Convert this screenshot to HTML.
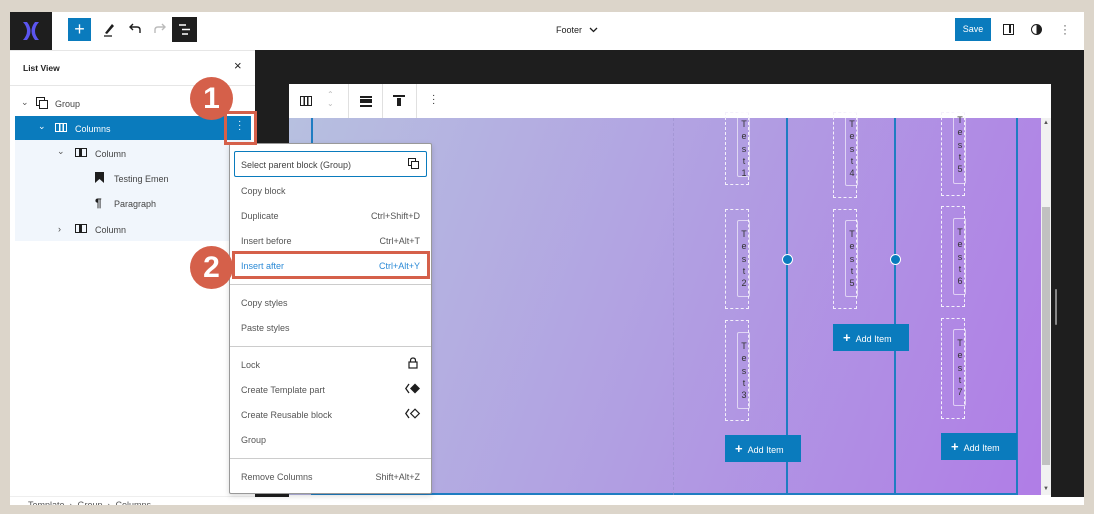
<!DOCTYPE html>
<html><head><meta charset="utf-8"><style>
*{margin:0;padding:0;box-sizing:border-box}
body{width:1094px;height:514px;background:#dcd5ca;font-family:"Liberation Sans",sans-serif;position:relative;overflow:hidden;color:#1e1e1e}
.a{position:absolute}
.t{font-size:9px}
.mi{position:absolute;left:11px;font-size:9px;color:#555}
.sc{position:absolute;right:11px;font-size:9px;color:#555}
.db{position:absolute;border:1px dashed #f4f0fb;width:24px}
.ib{position:absolute;border:1px solid rgba(255,255,255,.6);width:13px;border-radius:2px}
.vt{position:absolute;width:10px;font-size:9px;line-height:12.3px;text-align:center;color:#333}
.btn{position:absolute;background:#0a7bbd;color:#fff;font-size:9px;width:76px;height:27px;line-height:27px;padding-left:10px}
.btn b{font-size:13px;margin-right:5px;font-weight:bold}
.vl{position:absolute;width:2px;background:#1f7dc2;top:118px;height:377px}
</style></head><body>
<div class="a" style="left:10px;top:12px;width:1074px;height:493px;background:#fff"></div>
<!-- top bar -->
<div class="a" style="left:10px;top:12px;width:42px;height:38px;background:#1e1e1e"></div>
<svg class="a" style="left:18px;top:18px" width="26" height="26" viewBox="0 0 26 26"><path d="M5 4 Q13 13 5 22 L9 22 Q16 13 9 4Z M21 4 Q13 13 21 22 L17 22 Q10 13 17 4Z" fill="#5b55f0"/></svg>
<div class="a" style="left:68px;top:18px;width:23px;height:23px;background:#0a7bbd;color:#fff;text-align:center;font-size:18px;line-height:22px">+</div>
<svg class="a" style="left:101px;top:20px" width="16" height="18"><path d="M4 13 L11 4 L13 6 L6 14Z" fill="#1e1e1e"/><path d="M3 16 H11" stroke="#1e1e1e" stroke-width="1.3"/></svg>
<svg class="a" style="left:127px;top:22px" width="16" height="14"><path d="M13 11 V8 Q13 5 10 5 H3 M6 2 L3 5 L6 8" fill="none" stroke="#1e1e1e" stroke-width="1.4"/></svg>
<svg class="a" style="left:152px;top:22px" width="16" height="14"><path d="M3 11 V8 Q3 5 6 5 H13 M10 2 L13 5 L10 8" fill="none" stroke="#bbb" stroke-width="1.4"/></svg>
<div class="a" style="left:172px;top:17px;width:25px;height:25px;background:#1e1e1e"></div>
<svg class="a" style="left:177px;top:22px" width="15" height="15"><path d="M2 3 H9 M5 7.5 H13 M5 12 H11" stroke="#fff" stroke-width="1.5"/></svg>
<div class="a t" style="left:556px;top:25px">Footer</div>
<svg class="a" style="left:589px;top:27px" width="9" height="6"><path d="M1 1 L4.5 4.5 L8 1" fill="none" stroke="#1e1e1e" stroke-width="1.3"/></svg>
<div class="a" style="left:955px;top:18px;width:36px;height:23px;background:#0a7bbd;color:#fff;font-size:9px;text-align:center;line-height:23px">Save</div>
<div class="a" style="left:1003px;top:24px;width:11px;height:11px;border:1.5px solid #1e1e1e"><div class="a" style="left:5px;top:0;width:1.5px;height:8px;background:#1e1e1e"></div></div>
<div class="a" style="left:1031px;top:24px;width:11px;height:11px;border:1.5px solid #1e1e1e;border-radius:50%;background:linear-gradient(90deg,#fff 50%,#1e1e1e 50%)"></div>
<div class="a" style="left:1063px;top:23px;font-size:12px;line-height:4px;color:#555">·<br>·<br>·</div>
<!-- left panel -->
<div class="a" style="left:10px;top:50px;width:245px;height:455px;background:#fff;border-top:1px solid #e6e6e6"></div>
<div class="a t" style="left:23px;top:63px;font-weight:bold;font-size:8.5px">List View</div>
<div class="a" style="left:234px;top:58px;font-size:13px">×</div>
<div class="a" style="left:10px;top:85px;width:245px;height:1px;background:#e6e6e6"></div>
<div class="a" style="left:15px;top:140px;width:236px;height:101px;background:#f1f6fc"></div>
<div class="a" style="left:15px;top:116px;width:236px;height:24px;background:#0a7bbd"></div>
<div class="a t" style="left:21px;top:97px;color:#555">⌄</div>
<div class="a" style="left:36px;top:97px;width:9px;height:9px;border:1.3px solid #1e1e1e"></div><div class="a" style="left:39px;top:100px;width:9px;height:9px;border:1.3px solid #1e1e1e;background:#fff"></div>
<div class="a t" style="left:55px;top:99px;color:#444">Group</div>
<div class="a t" style="left:38px;top:121px;color:#fff">⌄</div>
<div class="a" style="left:55px;top:123px;width:12px;height:9px;border:1.3px solid #fff;background:linear-gradient(90deg,transparent 3px,#fff 3px,#fff 4.3px,transparent 4.3px,transparent 6.5px,#fff 6.5px,#fff 7.8px,transparent 7.8px)"></div>
<div class="a t" style="left:75px;top:124px;color:#fff">Columns</div>
<div class="a" style="left:238px;top:120px;font-size:10px;line-height:4px;color:#fff">·<br>·<br>·</div>
<div class="a t" style="left:57px;top:146px;color:#555">⌄</div>
<div class="a" style="left:75px;top:148px;width:12px;height:9px;border:1.3px solid #1e1e1e;background:linear-gradient(90deg,transparent 3px,#1e1e1e 3px,#1e1e1e 6px,transparent 6px)"></div>
<div class="a t" style="left:95px;top:149px;color:#444">Column</div>
<svg class="a" style="left:95px;top:172px" width="9" height="11"><path d="M0 0 H9 V11 L4.5 7 L0 11Z" fill="#1e1e1e"/></svg>
<div class="a t" style="left:114px;top:174px;color:#444">Testing Emen</div>
<div class="a" style="left:95px;top:196px;font-size:12px;font-weight:bold">¶</div>
<div class="a t" style="left:114px;top:199px;color:#444">Paragraph</div>
<div class="a t" style="left:58px;top:224px;color:#444">›</div>
<div class="a" style="left:75px;top:224px;width:12px;height:9px;border:1.3px solid #1e1e1e;background:linear-gradient(90deg,transparent 3px,#1e1e1e 3px,#1e1e1e 6px,transparent 6px)"></div>
<div class="a t" style="left:95px;top:225px;color:#444">Column</div>
<div class="a" style="left:10px;top:496px;width:245px;height:1px;background:#eee"></div>
<div class="a t" style="left:28px;top:500px;color:#555">Template &nbsp;›&nbsp; Group &nbsp;›&nbsp; Columns</div>
<!-- editor -->
<div class="a" style="left:255px;top:50px;width:829px;height:447px;background:#1e1e1e"></div>
<div class="a" style="left:289px;top:84px;width:762px;height:413px;background:#fff"></div>
<div class="a" style="left:289px;top:118px;width:752px;height:377px;background:linear-gradient(110deg,#b7c0e0 0%,#b19fe2 50%,#b07de6 100%)"></div>
<div class="a" style="left:1041px;top:118px;width:10px;height:377px;background:#f1f1f1"></div>
<div class="a" style="left:1042px;top:207px;width:8px;height:258px;background:#c1c1c1"></div>
<div class="a" style="left:1055px;top:289px;width:2px;height:36px;background:#888;border-radius:1px"></div>
<div class="a" style="left:1043px;top:120px;font-size:6px;color:#555">▲</div>
<div class="a" style="left:1043px;top:486px;font-size:6px;color:#555">▼</div>
<!-- block toolbar -->
<div class="a" style="left:348px;top:84px;width:1px;height:34px;background:#e0e0e0"></div>
<div class="a" style="left:382px;top:84px;width:1px;height:34px;background:#e0e0e0"></div>
<div class="a" style="left:416px;top:84px;width:1px;height:34px;background:#e0e0e0"></div>
<div class="a" style="left:300px;top:96px;width:12px;height:10px;border:1.3px solid #1e1e1e;background:linear-gradient(90deg,transparent 2.5px,#1e1e1e 2.5px,#1e1e1e 3.8px,transparent 3.8px,transparent 6px,#1e1e1e 6px,#1e1e1e 7.3px,transparent 7.3px)"></div>
<div class="a" style="left:327px;top:90px;font-size:8px;color:#bbb;line-height:9px">⌃<br>⌄</div>
<div class="a" style="left:360px;top:96px;width:12px;height:1.5px;background:#1e1e1e"></div><div class="a" style="left:360px;top:99px;width:12px;height:4px;background:#1e1e1e"></div><div class="a" style="left:360px;top:105px;width:12px;height:1.5px;background:#1e1e1e"></div>
<div class="a" style="left:393px;top:95px;width:12px;height:1.5px;background:#1e1e1e"></div><div class="a" style="left:397px;top:98px;width:4px;height:8px;background:#1e1e1e"></div>
<div class="a" style="left:432px;top:94px;font-size:10px;line-height:4px;color:#1e1e1e">·<br>·<br>·</div>
<!-- columns -->
<div class="vl" style="left:311px"></div>
<div class="vl" style="left:786px"></div>
<div class="vl" style="left:894px"></div>
<div class="vl" style="left:1016px"></div>
<div class="a" style="left:311px;top:493px;width:707px;height:2px;background:#1f7dc2"></div>
<div class="a" style="left:673px;top:118px;width:0;height:377px;border-left:1px dashed rgba(150,140,200,.5)"></div>
<div class="a" style="left:782px;top:254px;width:11px;height:11px;border-radius:50%;background:#0a7bbd;border:1px solid #fff"></div>
<div class="a" style="left:890px;top:254px;width:11px;height:11px;border-radius:50%;background:#0a7bbd;border:1px solid #fff"></div>
<!-- col1 -->
<div class="db" style="left:725px;top:112px;height:73px"></div><div class="ib" style="left:737px;top:112px;height:65px"></div>
<div class="vt" style="left:739px;top:118px">T<br>e<br>s<br>t<br>1</div>
<div class="db" style="left:725px;top:209px;height:100px"></div><div class="ib" style="left:737px;top:220px;height:77px"></div>
<div class="vt" style="left:739px;top:228px">T<br>e<br>s<br>t<br>2</div>
<div class="db" style="left:725px;top:320px;height:101px"></div><div class="ib" style="left:737px;top:332px;height:77px"></div>
<div class="vt" style="left:739px;top:340px">T<br>e<br>s<br>t<br>3</div>
<div class="btn" style="left:725px;top:435px"><b>+</b>Add Item</div>
<!-- col2 -->
<div class="db" style="left:833px;top:112px;height:86px"></div><div class="ib" style="left:845px;top:112px;height:74px"></div>
<div class="vt" style="left:847px;top:118px">T<br>e<br>s<br>t<br>4</div>
<div class="db" style="left:833px;top:209px;height:100px"></div><div class="ib" style="left:845px;top:220px;height:77px"></div>
<div class="vt" style="left:847px;top:228px">T<br>e<br>s<br>t<br>5</div>
<div class="btn" style="left:833px;top:324px"><b>+</b>Add Item</div>
<!-- col3 -->
<div class="db" style="left:941px;top:112px;height:84px"></div><div class="ib" style="left:953px;top:112px;height:72px"></div>
<div class="vt" style="left:955px;top:114px">T<br>e<br>s<br>t<br>5</div>
<div class="db" style="left:941px;top:206px;height:101px"></div><div class="ib" style="left:953px;top:218px;height:77px"></div>
<div class="vt" style="left:955px;top:226px">T<br>e<br>s<br>t<br>6</div>
<div class="db" style="left:941px;top:318px;height:101px"></div><div class="ib" style="left:953px;top:329px;height:77px"></div>
<div class="vt" style="left:955px;top:337px">T<br>e<br>s<br>t<br>7</div>
<div class="btn" style="left:941px;top:433px"><b>+</b>Add Item</div>
<!-- menu -->
<div class="a" style="left:229px;top:143px;width:203px;height:351px;background:#fff;border:1px solid #999;border-radius:2px;box-shadow:0 2px 6px rgba(0,0,0,.15)">
<div class="a" style="left:4px;top:7px;width:193px;height:26px;border:1.5px solid #0a7bbd;border-radius:2px"></div>
<div class="mi" style="top:16px;color:#444">Select parent block (Group)</div>
<div class="a" style="left:178px;top:14px;width:8px;height:8px;border:1.2px solid #1e1e1e"></div><div class="a" style="left:181px;top:17px;width:8px;height:8px;border:1.2px solid #1e1e1e;background:#fff"></div>
<div class="mi" style="top:42px">Copy block</div>
<div class="mi" style="top:67px">Duplicate</div><div class="sc" style="top:67px">Ctrl+Shift+D</div>
<div class="mi" style="top:92px">Insert before</div><div class="sc" style="top:92px">Ctrl+Alt+T</div>
<div class="mi" style="top:117px;color:#2b8ad6">Insert after</div><div class="sc" style="top:117px;color:#2b8ad6">Ctrl+Alt+Y</div>
<div class="a" style="left:0;top:140px;width:201px;height:1px;background:#ccc"></div>
<div class="mi" style="top:154px">Copy styles</div>
<div class="mi" style="top:179px">Paste styles</div>
<div class="a" style="left:0;top:202px;width:201px;height:1px;background:#ccc"></div>
<div class="mi" style="top:216px">Lock</div>
<svg class="a" style="left:178px;top:213px" width="10" height="12"><path d="M2.5 5 V3.5 Q2.5 1 5 1 Q7.5 1 7.5 3.5 V5" fill="none" stroke="#1e1e1e" stroke-width="1.2"/><rect x="1" y="5" width="8" height="6" fill="none" stroke="#1e1e1e" stroke-width="1.2"/></svg>
<div class="mi" style="top:241px">Create Template part</div>
<svg class="a" style="left:175px;top:239px" width="16" height="11"><path d="M4 1 L0.8 5.5 L4 10" fill="none" stroke="#1e1e1e" stroke-width="1.3"/><path d="M10 0.5 L15 5.5 L10 10.5 L5 5.5Z" fill="#1e1e1e"/></svg>
<div class="mi" style="top:266px">Create Reusable block</div>
<svg class="a" style="left:175px;top:264px" width="16" height="11"><path d="M4 1 L0.8 5.5 L4 10" fill="none" stroke="#1e1e1e" stroke-width="1.3"/><path d="M10 1.2 L14.3 5.5 L10 9.8 L5.7 5.5Z" fill="none" stroke="#1e1e1e" stroke-width="1.2"/></svg>
<div class="mi" style="top:291px">Group</div>
<div class="a" style="left:0;top:314px;width:201px;height:1px;background:#ccc"></div>
<div class="mi" style="top:328px">Remove Columns</div><div class="sc" style="top:328px">Shift+Alt+Z</div>
</div>
<!-- annotations -->
<div class="a" style="left:224px;top:111px;width:33px;height:34px;border:3px solid #d5604a"></div>
<div class="a" style="left:232px;top:251px;width:198px;height:28px;border:3px solid #d5604a"></div>
<div class="a" style="left:190px;top:77px;width:43px;height:43px;border-radius:50%;background:#d5604a;color:#fff;font-weight:bold;font-size:30px;text-align:center;line-height:43px">1</div>
<div class="a" style="left:190px;top:246px;width:43px;height:43px;border-radius:50%;background:#d5604a;color:#fff;font-weight:bold;font-size:30px;text-align:center;line-height:43px">2</div>
<div class="a" style="left:0;top:505px;width:1094px;height:9px;background:#dcd5ca"></div>
</body></html>
